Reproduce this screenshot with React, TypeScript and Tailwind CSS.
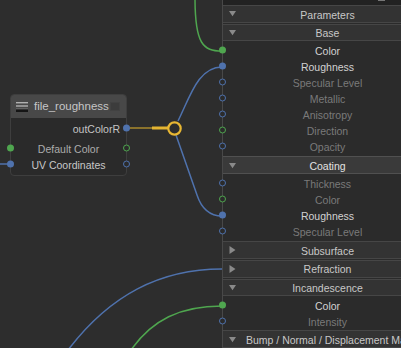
import React from "react";

type Sock = { color: "blue" | "green"; filled: boolean };
type Row = { label: string; bright: boolean; sock: Sock };

const BLUE = "#4f72ad";
const GREEN = "#4fa64f";

function Socket({ s, side }: { s: Sock; side: "left" | "right" }) {
  const pos = side === "left" ? "left-[-4px]" : "right-[-4px]";
  let cls = "";
  if (s.color === "blue" && s.filled) cls = "bg-[#4f72ad]";
  if (s.color === "green" && s.filled) cls = "bg-[#4fa64f]";
  if (s.color === "blue" && !s.filled) cls = "border-[1.5px] border-[#4f72ad] bg-[#2b2b2b]";
  if (s.color === "green" && !s.filled) cls = "border-[1.5px] border-[#4fa64f] bg-[#2b2b2b]";
  return (
    <div
      className={`absolute ${pos} top-1/2 -translate-y-1/2 w-[7px] h-[7px] rounded-full z-20 ${cls}`}
    />
  );
}

function Header({
  label,
  open,
  active,
  mt,
}: {
  label: string;
  open: boolean;
  active?: boolean;
  mt: string;
}) {
  return (
    <div
      className={`${mt} h-[18px] flex items-center pl-[6px] pr-[23px] border-y ${
        active ? "bg-[#3a3a3a] border-[#505050] text-[#e2e2e2]" : "bg-[#333333] border-[#464646] text-[#c8c8c8]"
      }`}
    >
      <div className="w-[7px] h-[7px] flex items-center justify-center flex-none">
        {open ? (
          <svg width="8" height="7" viewBox="0 0 8 7">
            <path d="M0 0.5 L8 0.5 L4 6.5 Z" fill="#8a8a8a" />
          </svg>
        ) : (
          <svg width="7" height="8" viewBox="0 0 7 8">
            <path d="M0.5 0 L6.5 4 L0.5 8 Z" fill="#8a8a8a" />
          </svg>
        )}
      </div>
      <div className="ml-[10px] pt-[2px] flex-1 min-w-0 text-center whitespace-nowrap text-[10.5px] leading-none">
        {label}
      </div>
    </div>
  );
}

function Rows({ rows }: { rows: Row[] }) {
  return (
    <div className="pt-[1px]">
      {rows.map((r, i) => (
        <div
          key={i}
          className={`relative h-[16px] pt-[2px] flex items-center justify-center text-[10.5px] leading-none ${
            r.bright ? "text-[#d2d2d2]" : "text-[#7a7a7a]"
          }`}
        >
          <Socket s={r.sock} side="left" />
          {r.label}
        </div>
      ))}
    </div>
  );
}

const bR: Sock = { color: "blue", filled: false };
const gR: Sock = { color: "green", filled: false };
const bF: Sock = { color: "blue", filled: true };
const gF: Sock = { color: "green", filled: true };

export default function App() {
  return (
    <div
      className="relative w-[401px] h-[348px] overflow-hidden bg-[#2d2d2d] flex"
      style={{ fontFamily: '"Liberation Sans", Arial, sans-serif' }}
    >
      {/* wires */}
      <svg
        className="absolute inset-0 pointer-events-none z-0"
        width="401"
        height="348"
        viewBox="0 0 401 348"
        fill="none"
      >
        <path d="M195 -2 C195 44, 203 51, 222 51" stroke={GREEN} strokeWidth="1.5" />
        <path d="M178 121 C190 97, 198 67, 222 67" stroke={BLUE} strokeWidth="1.5" />
        <path d="M176 135 L197 195 Q204 216 222 216" stroke={BLUE} strokeWidth="1.5" />
        <path d="M222 269 C160 269, 110 295, 68 350" stroke={BLUE} strokeWidth="1.5" />
        <path d="M222 306 C180 306, 152 320, 131 350" stroke={GREEN} strokeWidth="1.5" />
        <path d="M0 164 L10 164" stroke={BLUE} strokeWidth="1.5" />
        <path d="M128 128 L153 128" stroke="#c9a12c" strokeWidth="1.2" />
        <path d="M152 128 L168 128" stroke="#e4b431" strokeWidth="3" />
        <circle cx="174.5" cy="128.5" r="6.2" stroke="#e8b733" strokeWidth="2.2" fill="#2d2d2d" />
      </svg>

      {/* node */}
      <div className="absolute left-[10px] top-[94px] w-[117px] h-[82px] rounded-[4px] border border-[#3e3e3e] bg-[#2a2a2a] flex flex-col z-10">
        <div className="h-[23px] bg-[#484848] rounded-t-[3px] flex items-center pl-[5px] pr-[6px]">
          <svg width="12" height="10" viewBox="0 0 12 10" className="flex-none">
            <rect x="0" y="0" width="12" height="1.4" fill="#b0b0b0" />
            <rect x="0" y="3.3" width="12" height="1.4" fill="#b0b0b0" />
            <rect x="0" y="6.6" width="12" height="0.8" fill="#8a8a8a" />
            <rect x="0" y="7.4" width="12" height="2.6" fill="#151515" />
          </svg>
          <span className="ml-[6px] text-[11.5px] leading-none text-[#c6c6c6]">file_roughness</span>
          <div className="ml-auto w-[10px] h-[9px] bg-[#3c3c3c] border border-[#424242]" />
        </div>
        <div className="flex-1 pt-[2px] flex flex-col">
          <div className="relative h-[16px] pt-[2px] flex items-center justify-end pr-[6px] text-[10.5px] leading-none text-[#c4c4c4]">
            outColorR
            <Socket s={bF} side="right" />
          </div>
          <div className="relative mt-[4px] h-[16px] pt-[2px] flex items-center justify-center text-[10.5px] leading-none text-[#acacac]">
            <Socket s={gF} side="left" />
            Default Color
            <Socket s={gR} side="right" />
          </div>
          <div className="relative h-[16px] pt-[2px] flex items-center justify-center text-[10.5px] leading-none text-[#c8c8c8]">
            <Socket s={bF} side="left" />
            UV Coordinates
            <Socket s={bR} side="right" />
          </div>
        </div>
      </div>

      <div className="w-[222px] flex-none" />

      {/* panel */}
      <div className="relative z-10 w-[210px] flex-none border-l border-[#484848] bg-[#2b2b2b] flex flex-col">
        <div className="h-[5px] bg-[#222222] relative">
          <div className="absolute left-[155px] top-0 w-[7px] h-[1px] bg-[#777777]" />
        </div>
        <Header label="Parameters" open mt="mt-0" />
        <Header label="Base" open mt="mt-[1px]" />
        <Rows
          rows={[
            { label: "Color", bright: true, sock: gF },
            { label: "Roughness", bright: true, sock: bF },
            { label: "Specular Level", bright: false, sock: bR },
            { label: "Metallic", bright: false, sock: bR },
            { label: "Anisotropy", bright: false, sock: bR },
            { label: "Direction", bright: false, sock: gR },
            { label: "Opacity", bright: false, sock: bR },
          ]}
        />
        <Header label="Coating" open active mt="mt-[2px]" />
        <Rows
          rows={[
            { label: "Thickness", bright: false, sock: bR },
            { label: "Color", bright: false, sock: gR },
            { label: "Roughness", bright: true, sock: bF },
            { label: "Specular Level", bright: false, sock: bR },
          ]}
        />
        <Header label="Subsurface" open={false} mt="mt-[2px]" />
        <Header label="Refraction" open={false} mt="mt-[1px]" />
        <Header label="Incandescence" open mt="mt-[1px]" />
        <Rows
          rows={[
            { label: "Color", bright: true, sock: gF },
            { label: "Intensity", bright: false, sock: bR },
          ]}
        />
        <Header label="Bump / Normal / Displacement Map" open mt="mt-[1px]" />
      </div>
    </div>
  );
}
